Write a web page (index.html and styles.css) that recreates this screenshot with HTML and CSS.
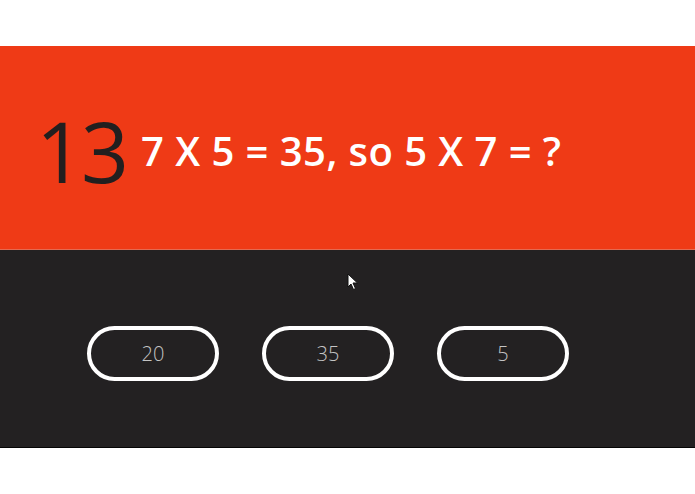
FILE: index.html
```html
<!DOCTYPE html>
<html>
<head>
<meta charset="utf-8">
<link rel="stylesheet" href="styles.css">
</head>
<body>
<div class="spacer"></div>
<header class="question">
  <span class="qnum">13</span>
  <span class="qtext">7 X 5 = 35, so 5 X 7 = ?</span>
</header>
<section class="answers">
  <div class="options">
    <button class="opt">20</button>
    <button class="opt">35</button>
    <button class="opt">5</button>
  </div>
  <svg class="cursor" width="12" height="18" viewBox="0 0 12 18"><path d="M1 1 L1 14 L4 11 L6.5 16.5 L8.5 15.5 L6 10 L10.5 10 Z" fill="#fff" stroke="#111" stroke-width="1"/></svg>
</section>
</body>
</html>
```
FILE: styles.css
```css
html, body { margin: 0; padding: 0; background: #ffffff; }
body { font-family: "Open Sans", "DejaVu Sans", sans-serif; }
.spacer { height: 46px; }
.question {
  height: 204px;
  background: #ef3a16;
  display: flex;
  align-items: center;
  padding-left: 36px;
  box-sizing: border-box;
  padding-top: 6px;
  border-bottom: 1px solid #e46a52;
}
.qnum {
  font-size: 84px;
  font-weight: 400;
  color: #221f1f;
  letter-spacing: -3px;
  line-height: 1;
}
.qtext {
  font-size: 40px;
  font-weight: 600;
  color: #ffffff;
  margin-left: 15px;
  letter-spacing: 0.45px;
  line-height: 1;
}
.answers {
  position: relative;
  height: 197px;
  background: #232122;
  border-bottom: 1px solid #050505;
  box-sizing: content-box;
}
.options {
  display: flex;
  gap: 43px;
  padding-left: 87px;
  padding-top: 76px;
}
.opt {
  width: 132px;
  height: 55px;
  border: 4px solid #ffffff;
  border-radius: 28px;
  background: transparent;
  color: #c4c4c4;
  font-family: "Open Sans", sans-serif;
  font-weight: 300;
  font-size: 20px;
  box-sizing: border-box;
  padding: 0;
}
.cursor { position: absolute; left: 347px; top: 23px; }
```
